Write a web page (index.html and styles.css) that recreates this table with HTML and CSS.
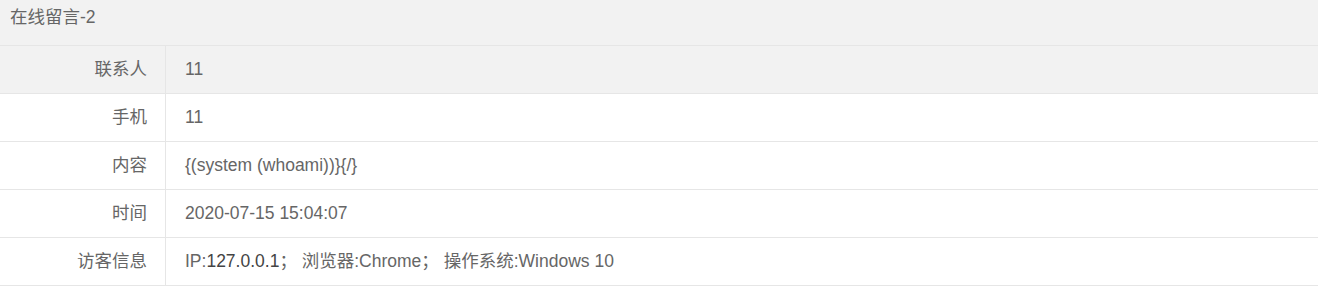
FILE: index.html
```html
<!DOCTYPE html>
<html lang="zh-CN">
<head>
<meta charset="utf-8">
<title>在线留言-2</title>
<link rel="stylesheet" href="styles.css">
</head>
<body>
<div class="card">
  <div class="card-header">在线留言-2</div>
  <div class="detail">
    <div class="row row-shade">
      <div class="label">联系人</div>
      <div class="value">11</div>
    </div>
    <div class="row">
      <div class="label">手机</div>
      <div class="value">11</div>
    </div>
    <div class="row">
      <div class="label">内容</div>
      <div class="value">{(system (whoami))}{/}</div>
    </div>
    <div class="row">
      <div class="label">时间</div>
      <div class="value">2020-07-15 15:04:07</div>
    </div>
    <div class="row">
      <div class="label">访客信息</div>
      <div class="value">IP:<span class="ip">127.0.0.1</span>； 浏览器:Chrome； 操作系统:Windows 10</div>
    </div>
  </div>
</div>
</body>
</html>
```
FILE: styles.css
```css
html, body {
  margin: 0;
  padding: 0;
  background: #ffffff;
}
body {
  font-family: "Liberation Sans", Arial, "Noto Sans CJK SC", sans-serif;
  font-size: 17.5px;
  color: #666666;
}
.card {
  width: 1318px;
}
.card-header {
  height: 45px;
  line-height: 35px;
  padding: 0 10px;
  box-sizing: border-box;
  background: #f2f2f2;
  color: #666666;
}
.detail {
  border-top: 1px solid #e6e6e6;
}
.row {
  display: grid;
  grid-template-columns: 166px 1fr;
  height: 48px;
  box-sizing: border-box;
  border-bottom: 1px solid #e6e6e6;
  background: #ffffff;
}
.row-shade {
  background: #f2f2f2;
}
.label {
  border-right: 1px solid #e6e6e6;
  text-align: right;
  padding-right: 18px;
  line-height: 47px;
  white-space: nowrap;
}
.value {
  padding-left: 19px;
  line-height: 47px;
  white-space: nowrap;
}
.ip {
  color: #444444;
}
```
